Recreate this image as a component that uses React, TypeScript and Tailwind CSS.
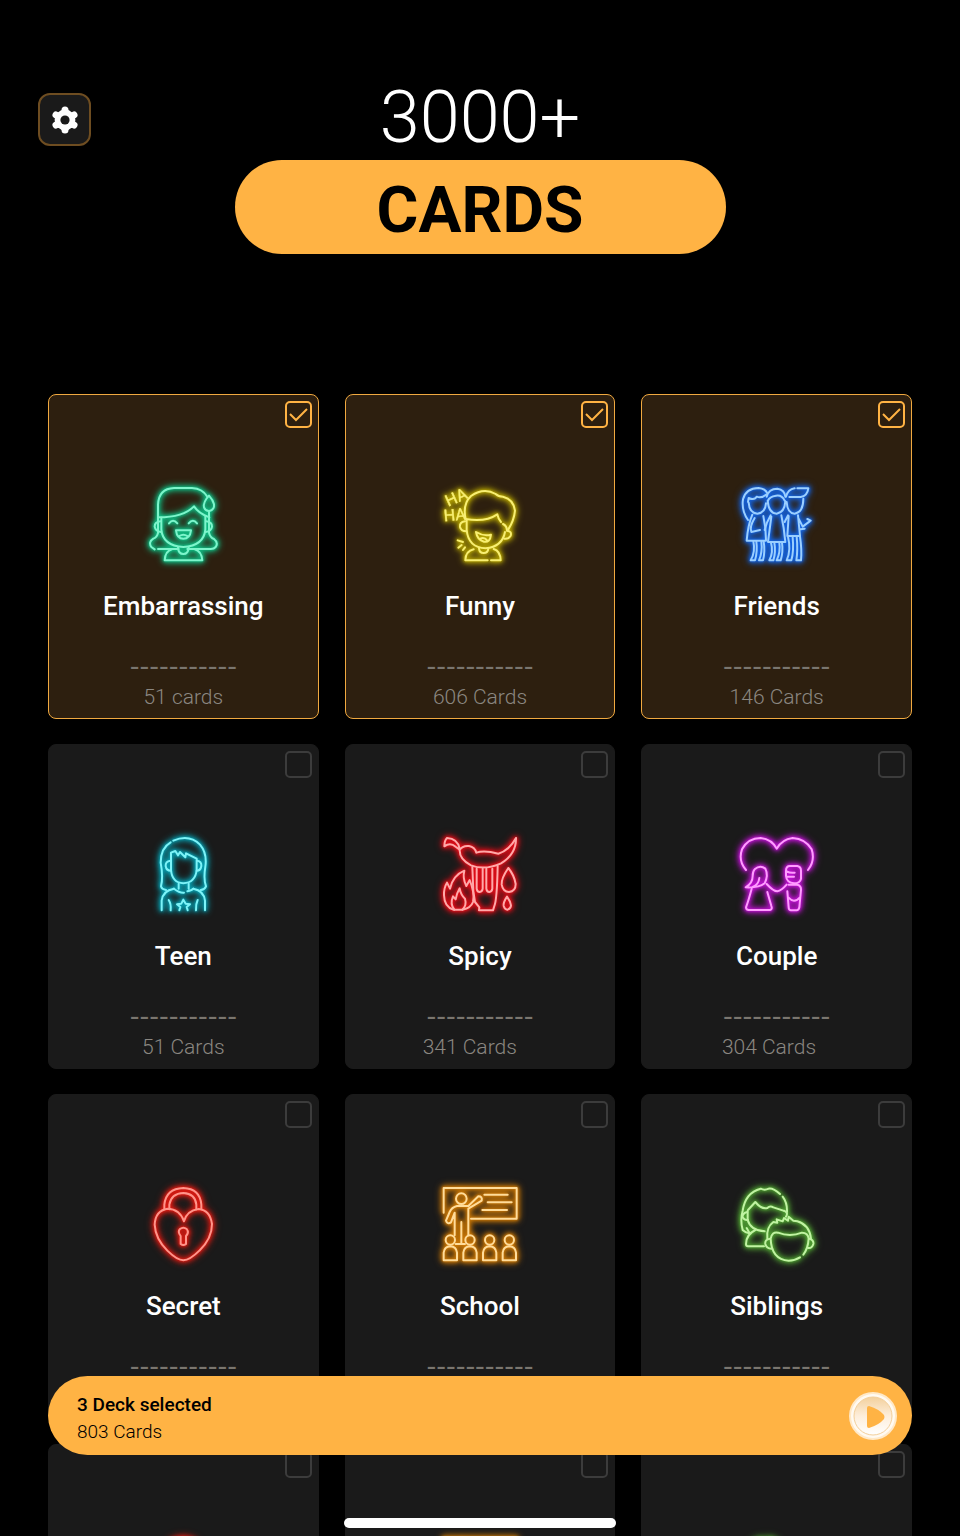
import React, { useState } from 'react';

interface Neon {
  viewBox: string;
  glow: string;
  line: string;
  art: React.ReactNode;
}

interface Deck {
  id: string;
  title?: string;
  count?: string;
  icon: Neon;
}

const LEFT = '-6 0 330 330';
const MIDDLE = '0 0 330 330';
const RIGHT = '6 0 330 330';

const embarrassing: Neon = {
  viewBox: LEFT,
  glow: 'text-[#10b981]',
  line: '#7df5cb',
  art: (
    <>
      <path d="M84 188V104Q86 56 132 54H186Q218 56 232 80" />
      <path d="M237 77Q219 96 222 112Q227 124 238 123Q254 119 252 103Q249 90 237 77Z" />
      <path d="M85 142Q160 142 192 109Q206 130 238 142" />
      <path d="M237 126V188Q240 202 252 207Q266 218 257 231Q251 238 240 237H172" />
      <path d="M84 188Q82 202 70 206Q54 216 64 231L74 238M84 237H146" />
      <path d="M94 143V178Q98 227 160 231Q222 227 226 178V138" />
      <path d="M91 154Q74 156 74 170Q76 184 93 186M229 154Q246 156 246 170Q244 184 227 186" />
      <path d="M117 160Q129 144 142 160M176 160Q189 144 201 160" />
      <path d="M138 181H183Q180 206 160 206Q141 206 138 181ZM148 198Q160 190 172 198" />
      <path d="M144 232Q145 252 160 252Q175 252 176 232M126 238Q106 243 104 271H217Q214 243 194 238" />
    </>
  ),
};

const funny: Neon = {
  viewBox: MIDDLE,
  glow: 'text-[#b5a400]',
  line: '#f8ef72',
  art: (
    <>
      <g fill="#f8ef72" strokeWidth="1" fontFamily="Roboto, sans-serif" fontSize="48">
        <text transform="translate(70 110) rotate(-24)">HA</text>
        <text transform="translate(58 154) rotate(-5)">HA</text>
      </g>
      <path d="M122 148Q112 102 138 78Q176 52 212 72Q220 80 234 80Q266 88 270 122Q267 152 250 178" />
      <path d="M122 147Q180 158 217 133Q220 148 228 156M234 162Q246 168 246 182" />
      <path d="M125 150V180Q130 233 182 235Q232 230 240 186" />
      <path d="M120 154Q103 157 105 171Q108 184 124 184M247 182Q261 184 257 197Q250 208 238 206" />
      <path d="M153 186Q176 200 198 194Q195 219 177 215Q157 210 153 186ZM166 206Q178 200 187 212" />
      <path d="M98 211L114 216M100 233L110 225M114 240L120 232" />
      <path d="M162 235Q163 249 176 249Q189 249 190 235M146 238Q122 243 121 271H188M198 271H227Q226 243 206 237" />
    </>
  ),
};

const friends: Neon = {
  viewBox: RIGHT,
  glow: 'text-[#1463e0]',
  line: '#9bcfff',
  art: (
    <>
      <path d="M84 150Q64 122 69 88Q78 54 116 54Q136 56 142 70" />
      <path d="M84 96L86 84Q104 92 110 80Q124 86 138 74M86 98Q88 129 112 131Q136 128 138 100" />
      <path d="M140 80Q146 56 172 56Q194 59 196 80M144 92Q148 80 168 77Q186 74 194 92" />
      <path d="M143 92Q146 130 170 131Q194 127 196 94" />
      <path d="M198 80Q204 58 224 55M232 55H265Q262 78 242 81H208M200 96Q202 130 224 131Q250 126 250 86" />
      <path d="M97 134Q84 164 80 212H138Q138 172 130 138M104 144Q88 170 94 186L120 180" />
      <path d="M152 136Q140 156 134 180M154 140L144 216H196Q192 172 184 136" />
      <path d="M204 136L194 156M206 138L202 198H240L234 136M236 146L248 170L268 155M262 147L272 152M242 178L254 176" />
      <path d="M100 214Q107 246 92 271H105Q113 244 109 214M124 214Q128 246 117 271H129Q136 244 131 214" />
      <path d="M153 218Q161 246 148 271H160Q168 246 163 218M178 218Q182 246 170 271H182Q190 246 186 218" />
      <path d="M204 200Q214 240 200 271H214Q222 244 218 202M230 200Q234 240 229 271H243Q246 240 240 200" />
    </>
  ),
};

const teen: Neon = {
  viewBox: LEFT,
  glow: 'text-[#079fb0]',
  line: '#7df3f8',
  art: (
    <>
      <path d="M122 67Q92 84 92 128Q100 172 93 199Q95 208 108 210" />
      <path d="M130 62Q178 42 210 74Q232 100 226 140Q220 178 228 199Q224 209 212 210" />
      <path d="M123 98V150Q126 188 160 190Q196 188 200 150V116L168 100L166 112L150 96L144 106L136 93L123 98" />
      <path d="M121 122Q106 124 107 138Q109 152 122 152M202 122Q215 124 214 138Q212 152 200 152" />
      <path d="M146 191V206M176 191V206M132 206Q148 219 162 218M172 214Q186 211 190 206" />
      <path d="M95 271V242Q98 212 132 206M190 206Q222 212 225 242V271M122 271Q124 252 116 240M198 271Q197 252 203 240" />
      <path d="M148 271L151 261L141 253L154 251L160 239L167 251L180 253L170 261L173 271" />
    </>
  ),
};

const spicy: Neon = {
  viewBox: MIDDLE,
  glow: 'text-[#e30d18]',
  line: '#ffa9a9',
  art: (
    <>
      <path d="M104 86Q98 56 66 54Q58 62 58 79Q76 66 92 80L102 88" />
      <path d="M104 90Q112 76 132 78Q150 82 154 98Q178 90 220 101Q252 92 273 54Q274 102 228 130Q180 152 138 136Q103 118 104 90Z" />
      <path d="M142 141L145 214L150 246L163 262L162 271H204L208 258Q216 240 218 138" />
      <path d="M155 146V206Q156 216 164 216Q172 215 173 206V146M184 146V206Q185 216 193 216Q201 215 202 206V146" />
      <path d="M86 269Q58 262 57 226Q56 204 66 188L75 206Q84 166 118 152Q112 174 124 198L134 180Q150 220 144 246Q138 264 112 269Z" />
      <path d="M88 269Q74 252 84 229L92 238Q96 218 104 205Q107 224 120 236Q126 256 112 269" />
      <path d="M250 144Q228 176 230 194Q234 216 252 216Q272 214 272 192Q268 166 250 144Z" />
      <path d="M246 230Q234 248 236 258Q240 270 248 269Q258 266 258 256Q256 244 246 230Z" />
    </>
  ),
};

const couple: Neon = {
  viewBox: RIGHT,
  glow: 'text-[#c112d4]',
  line: '#ff9dff',
  art: (
    <>
      <path d="M78 150Q54 122 66 88Q84 54 122 54Q156 58 170 86Q186 58 218 54Q256 56 275 88Q286 122 264 150" />
      <path d="M104 148Q120 134 136 146Q146 166 134 190Q116 204 77 202Q98 190 98 168Q98 154 104 148ZM98 201Q116 194 118 174" />
      <path d="M95 206Q86 240 78 262Q78 270 86 270H150Q158 268 154 258L142 216M140 192Q160 214 172 214Q184 212 200 194" />
      <path d="M198 152Q198 138 210 138H232Q243 140 243 152V176Q240 190 222 190Q200 188 198 168ZM200 154Q210 160 224 158M200 170H222" />
      <path d="M206 194H232Q244 197 243 210L238 262Q236 271 230 271H212Q206 270 206 262L202 214M205 232Q214 242 222 242Q232 242 240 232" />
    </>
  ),
};

const secret: Neon = {
  viewBox: LEFT,
  glow: 'text-[#de1a12]',
  line: '#ff948a',
  art: (
    <>
      <path d="M103 118V104Q108 56 160 54Q210 56 214 104V118M118 118V104Q124 70 160 69Q196 71 199 104V118" />
      <path d="M162 154Q150 117 112 116Q76 122 74 164Q76 206 112 242Q142 271 160 271Q180 270 208 242Q246 206 246 162Q240 120 206 117Q170 122 162 154Z" />
      <path d="M152 198Q142 185 150 177Q160 169 170 177Q178 187 168 198V222Q160 228 152 222Z" />
    </>
  ),
};

const school: Neon = {
  viewBox: MIDDLE,
  glow: 'text-[#d07a05]',
  line: '#ffdc9a',
  art: (
    <>
      <path d="M56 128V54H275V146H138M178 74H248M188 97H260M172 120H246" />
      <circle cx="109" cy="86" r="16" />
      <path d="M96 108H130L160 79Q173 79 170 92L130 116V196M96 108Q80 112 74 126L63 152Q67 164 78 157L89 128V196M109 156V222M92 222H120" />
      {[76, 135, 194, 253].map((cx) => (
        <g key={cx}>
          <circle cx={cx} cy="210" r="14" />
          <path d={`M${cx - 20} 271V248Q${cx - 18} 230 ${cx} 229Q${cx + 18} 230 ${cx + 20} 248V271Z`} />
        </g>
      ))}
    </>
  ),
};

const siblings: Neon = {
  viewBox: RIGHT,
  glow: 'text-[#4f9f32]',
  line: '#c0f3a2',
  art: (
    <>
      <path d="M180 72Q160 54 146 56Q134 62 122 56Q76 68 68 122Q60 150 68 180Q76 188 88 190M188 80Q202 98 201 126" />
      <path d="M84 120L106 96Q124 118 142 114Q150 106 160 112L190 122M83 122V150Q92 182 134 184" />
      <path d="M82 126Q66 130 68 142Q74 152 84 150M192 122Q206 128 198 140M80 174L88 188" />
      <path d="M106 180Q78 194 78 222Q78 229 84 229H132" />
      <path d="M142 206Q138 172 160 156L172 158L170 148L188 154L192 144L204 152L206 140L220 152L232 154Q268 164 273 206" />
      <path d="M152 206Q156 184 174 188Q210 202 246 188Q264 188 266 206M152 206Q154 268 206 272Q224 272 240 262M250 254Q264 236 266 206" />
      <path d="M150 206Q134 208 136 222Q140 236 154 236M268 206Q282 210 280 222Q276 236 264 234" />
    </>
  ),
};

const DECKS: Deck[] = [
  { id: 'embarrassing', title: 'Embarrassing', count: '51 cards', icon: embarrassing },
  { id: 'funny', title: 'Funny', count: '606 Cards', icon: funny },
  { id: 'friends', title: 'Friends', count: '146 Cards', icon: friends },
  { id: 'teen', title: 'Teen', count: '51 Cards', icon: teen },
  { id: 'spicy', title: 'Spicy', count: '341 Cards\u00a0\u00a0\u00a0\u00a0', icon: spicy },
  { id: 'couple', title: 'Couple', count: '304 Cards\u00a0\u00a0\u00a0', icon: couple },
  { id: 'secret', title: 'Secret', icon: secret },
  { id: 'school', title: 'School', icon: school },
  { id: 'siblings', title: 'Siblings', icon: siblings },
  { id: 'extra-1', icon: secret },
  { id: 'extra-2', icon: school },
  { id: 'extra-3', icon: siblings },
];

const NeonIcon: React.FC<{ icon: Neon }> = ({ icon }) => (
  <svg
    viewBox={icon.viewBox}
    aria-hidden="true"
    className={`h-[110px] w-[110px] ${icon.glow} [filter:drop-shadow(0_0_1px_currentColor)_drop-shadow(0_0_2px_currentColor)_drop-shadow(0_0_3px_currentColor)]`}
    fill="none"
    stroke={icon.line}
    strokeWidth="6"
    strokeLinecap="round"
    strokeLinejoin="round"
  >
    {icon.art}
  </svg>
);

interface DeckCardProps {
  deck: Deck;
  selected: boolean;
  onToggle: () => void;
}

const DeckCard: React.FC<DeckCardProps> = ({ deck, selected, onToggle }) => (
  <label
    className={`relative flex h-[325px] cursor-pointer flex-col items-center rounded-lg border pt-[75px] ${
      selected ? 'border-[#f0a940] bg-[#2d1f0f]' : 'border-[#1a1a1a] bg-[#1a1a1a]'
    }`}
  >
    <span className="absolute top-[6px] right-[6px] h-[27px] w-[27px]">
      <input
        type="checkbox"
        checked={selected}
        onChange={onToggle}
        aria-label={deck.title ?? 'Deck'}
        className="block h-full w-full appearance-none rounded-[5px] border-2 border-[#3c3c3c] checked:border-[#ffb344]"
      />
      {selected && (
        <svg viewBox="0 0 27 27" className="pointer-events-none absolute inset-0" fill="none" stroke="#ffb344" strokeWidth="2">
          <path d="M5 13L11 19L22 8" />
        </svg>
      )}
    </span>

    <NeonIcon icon={deck.icon} />
    {deck.title && (
      <>
        <span className="mt-[10px] text-[26px] leading-8 font-medium text-white">{deck.title}</span>
        <span className="mt-7 font-['DejaVu_Sans',sans-serif] text-[27px] leading-8 text-[#7a766f]">-----------</span>
        <span className="mt-px text-[21px] leading-7 font-light text-[#8b8781]">{deck.count}</span>
      </>
    )}
  </label>
);

const App: React.FC = () => {
  const [selected, setSelected] = useState<string[]>(['embarrassing', 'funny', 'friends']);

  const toggle = (id: string) => {
    setSelected((prev) => (prev.includes(id) ? prev.filter((d) => d !== id) : [...prev, id]));
  };

  const total = DECKS.filter((d) => selected.includes(d.id)).reduce((sum, d) => sum + parseInt(d.count ?? '0', 10), 0);

  return (
    <div className="h-screen overflow-y-auto bg-black font-[Roboto,sans-serif] [scrollbar-width:none]">
      <header className="grid grid-cols-[1fr_minmax(0,491px)_1fr] items-start px-[38px] pt-[84px]">
        <button
          type="button"
          aria-label="Settings"
          className="mt-[9px] flex h-[53px] w-[53px] items-center justify-center rounded-xl border-2 border-[#6e4d21] bg-[#1a1a1a]"
        >
          <svg viewBox="0 0 28 28" className="h-7 w-7">
            <g stroke="#fff" strokeWidth="7" strokeLinecap="round">
              <path d="M14 4V24M5 9L23 19M23 9L5 19" />
            </g>
            <circle cx="14" cy="14" r="10.4" fill="#fff" />
            <circle cx="14" cy="14" r="4.6" fill="#1a1a1a" />
          </svg>
        </button>
        <h1 className="text-center">
          <span className="block pt-1 text-[72px] leading-[60px] font-light text-white">3000+</span>
          <span className="mt-3 flex h-[94px] items-center justify-center rounded-full bg-[#ffb344] pt-2 text-[64px] leading-none font-bold text-black">
            CARDS
          </span>
        </h1>
      </header>

      <main className="mt-[140px] grid grid-cols-3 gap-x-[26px] gap-y-[25px] px-12">
        {DECKS.map((deck) => (
          <DeckCard key={deck.id} deck={deck} selected={selected.includes(deck.id)} onToggle={() => toggle(deck.id)} />
        ))}
      </main>

      {/* Selection bar */}
      <div className="fixed inset-x-12 bottom-[81px] flex h-[79px] items-center justify-between rounded-full bg-[#ffb344] pr-[15px] pl-[29px] text-[19px] leading-[27px] text-black">
        <div className="pt-1">
          <p className="font-medium">{selected.length} Deck selected</p>
          <p className="font-light">{total} Cards</p>
        </div>
        <button type="button" aria-label="Play" className="h-12 w-12 rounded-full">
          <svg viewBox="0 0 48 48" className="h-12 w-12">
            <defs>
              <linearGradient id="playFace" x1="0" y1="0" x2="0" y2="1">
                <stop offset="0" stopColor="#f3d09c" />
                <stop offset="0.5" stopColor="#fdeedb" />
                <stop offset="1" stopColor="#ffffff" />
              </linearGradient>
            </defs>
            <circle cx="24" cy="24" r="24" fill="#ffe9c8" />
            <circle cx="24" cy="24" r="22" fill="#fffaf2" />
            <circle cx="24" cy="24" r="19" fill="url(#playFace)" stroke="#f3cf9a" strokeWidth="1" />
            <path d="M20 14Q30 17 35 23Q36 25 35 27Q30 33 20 36Q18 36 18 34V16Q18 14 20 14Z" fill="#ffb344" />
          </svg>
        </button>
      </div>

      {/* Home indicator */}
      <div className="fixed bottom-2 left-1/2 h-[10px] w-[272px] -translate-x-1/2 rounded-full bg-white" />
    </div>
  );
};

export default App;
